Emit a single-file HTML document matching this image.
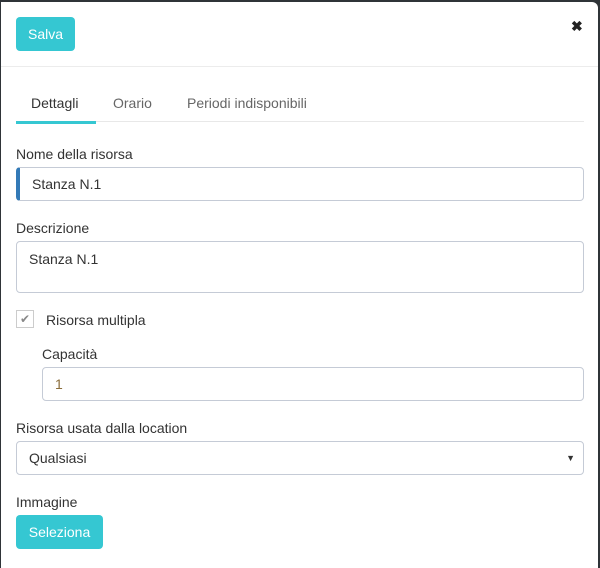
<!DOCTYPE html>
<html><head><style>
*{box-sizing:border-box;margin:0;padding:0}
html,body{width:600px;height:568px;overflow:hidden}
body{background:#2f3438;position:relative;font-family:"Liberation Sans",sans-serif;font-size:14px;color:#333}
.m{position:absolute;left:1px;top:2px;width:597px;height:566px;background:#fff;border-radius:0 6px 0 0}
.a{position:absolute}
.btn{background:#35c7d2;color:#fff;border-radius:4px;text-align:center;font-size:14px}
.inp{border:1px solid #c5cbd6;border-radius:4px;background:#fff;color:#333;padding-left:12px}
.lbl{color:#333;font-size:14px}
</style></head><body>
<div class="m"></div>
<div class="a btn" style="left:16px;top:17px;width:59px;height:34px;line-height:34px">Salva</div>
<div class="a" style="left:571px;top:18px;font-size:14px;font-weight:bold;color:#222">✖</div>
<div class="a" style="left:1px;top:66px;width:597px;height:1px;background:#ececec"></div>
<div class="a" style="left:31px;top:95px;color:#333">Dettagli</div>
<div class="a" style="left:113px;top:95px;color:#666">Orario</div>
<div class="a" style="left:187px;top:95px;color:#666">Periodi indisponibili</div>
<div class="a" style="left:16px;top:121px;width:568px;height:1px;background:#e8e8e8"></div>
<div class="a" style="left:16px;top:121px;width:80px;height:3px;background:#35c7d2"></div>
<div class="a lbl" style="left:16px;top:146px">Nome della risorsa</div>
<div class="a inp" style="left:16px;top:167px;width:568px;height:34px;line-height:33px;border-left:4px solid #337ab7;padding-left:12px">Stanza N.1</div>
<div class="a lbl" style="left:16px;top:220px">Descrizione</div>
<div class="a inp" style="left:16px;top:241px;width:568px;height:52px;padding-top:9px">Stanza N.1</div>
<div class="a" style="left:16px;top:310px;width:18px;height:18px;border:1px solid #ccc;color:#888;font-size:12px;text-align:center;line-height:16px">✔</div>
<div class="a lbl" style="left:46px;top:312px">Risorsa multipla</div>
<div class="a lbl" style="left:42px;top:346px">Capacità</div>
<div class="a inp" style="left:42px;top:367px;width:542px;height:34px;line-height:33px;color:#8a6d3b">1</div>
<div class="a lbl" style="left:16px;top:420px">Risorsa usata dalla location</div>
<div class="a inp" style="left:16px;top:441px;width:568px;height:34px;line-height:33px">Qualsiasi<span style="position:absolute;right:8px;font-size:9px;color:#333">▼</span></div>
<div class="a lbl" style="left:16px;top:494px">Immagine</div>
<div class="a btn" style="left:16px;top:515px;width:87px;height:34px;line-height:34px">Seleziona</div>
</body></html>
